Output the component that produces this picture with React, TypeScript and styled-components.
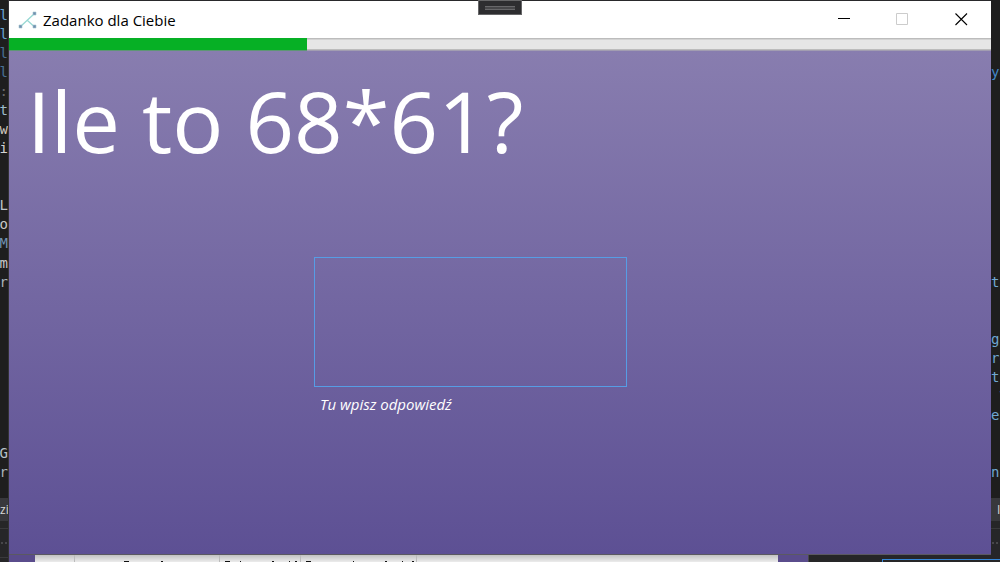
import React from "react";
import styled, { createGlobalStyle } from "styled-components";

const GlobalStyle = createGlobalStyle`
  * { box-sizing: border-box; }
  body { margin: 0; background: #1e1e1e; font-family: "Open Sans", "Noto Sans", sans-serif; }
`;

const Desktop = styled.div`
  display: grid;
  grid-template-columns: 9px minmax(0, 1fr) 9px;
  grid-template-rows: minmax(0, 1fr) 7px;
  height: 100vh;
  overflow: hidden;
  background: #1e1e1e;
`;

const Strip = styled.aside<{ $side: "left" | "right" }>`
  grid-row: ${(p) => (p.$side === "left" ? "1 / 3" : "1 / 2")};
  grid-column: ${(p) => (p.$side === "left" ? 1 : 3)};
  display: flex;
  flex-direction: column;
  overflow: hidden;
  border-right: ${(p) => (p.$side === "left" ? "1px solid #333235" : "0")};
`;

const Code = styled.div`
  flex: 1;
  display: flex;
  flex-direction: column;
  padding: 5px 0 16px;
  font: 14px "DejaVu Sans Mono", monospace;
`;

const CodeLine = styled.div<{ $side: "left" | "right"; $color: string }>`
  flex: 1;
  display: flex;
  align-items: center;
  justify-content: ${(p) => (p.$side === "left" ? "flex-end" : "flex-start")};
  min-height: 0;
  white-space: pre;
  color: ${(p) => p.$color};
`;

const PanelTab = styled.div<{ $side: "left" | "right" }>`
  display: flex;
  align-items: center;
  height: 23px;
  padding-left: ${(p) => (p.$side === "left" ? 0 : 6)}px;
  background: #38383c;
  color: #d8d8d8;
  font-size: 12px;
  white-space: nowrap;
`;

const PanelBody = styled.div<{ $tall: boolean }>`
  height: ${(p) => (p.$tall ? 41 : 34)}px;
  padding-top: 7px;
  background: #262628;
`;

const PanelRow = styled.div<{ $closed: boolean }>`
  height: 30px;
  border: solid #39393c;
  border-width: ${(p) => (p.$closed ? "1px 0" : "1px 0 0")};
  background: radial-gradient(circle, #47474a 1px, transparent 1px) 0 10px / 4px 8px repeat-x;
`;

const Window = styled.main`
  position: relative;
  grid-column: 2;
  grid-row: 1;
  display: flex;
  flex-direction: column;
  min-width: 0;
  border-top: 1px solid #29292b;
  background: #fff;
`;

const TitleBar = styled.header`
  display: flex;
  align-items: center;
  height: 37px;
  padding-left: 9px;
  background: #fff;
`;

const Title = styled.span`
  flex: 1;
  padding-left: 6px;
  color: #000;
  font-size: 15px;
  line-height: 20px;
`;

const CaptionButton = styled.button`
  display: flex;
  align-items: center;
  justify-content: center;
  width: 59px;
  height: 37px;
  padding: 0;
  border: 0;
  background: none;
`;

const Progress = styled.progress`
  display: block;
  flex: none;
  width: 100%;
  height: 13px;
  border: 0;
  appearance: none;
  background: #e6e6e6;
  &::-webkit-progress-bar {
    background: linear-gradient(#bcbcbc 1px, #d3d3d3 1px 2px, #e6e6e6 2px 11px, #bcbcbc 11px 12px, #a29db1 12px);
  }
  &::-webkit-progress-value {
    background: linear-gradient(#06b025 12px, #5e9675 12px);
  }
`;

const Content = styled.section`
  flex: 1;
  padding: 9px 18px;
  background: linear-gradient(#887daf, #5d5094);
  border-bottom: 1px solid #5b5961;
  color: #fff;
`;

const Question = styled.h1`
  margin: 0;
  font-size: 85px;
  font-weight: 400;
  line-height: 120px;
  white-space: nowrap;
`;

const AnswerField = styled.div`
  display: flex;
  flex-direction: column;
  width: 313px;
  margin: 77px 0 0 287px;
`;

const AnswerInput = styled.input`
  width: 100%;
  height: 130px;
  padding: 0 8px;
  border: 1px solid #569de5;
  background: transparent;
  color: #fff;
  font: 85px "Open Sans", sans-serif;
  outline: none;
`;

const AnswerLabel = styled.label`
  padding: 7px 6px 0;
  font-size: 15px;
  font-style: italic;
  line-height: 20px;
`;

const DebugHandle = styled.div`
  position: absolute;
  top: -1px;
  left: 469px;
  width: 44px;
  height: 15px;
  padding: 5px 6px;
  border: 1px solid #666668;
  background: #2d2d30;
`;

const Grip = styled.div`
  height: 4px;
  border: solid #67676a;
  border-width: 1px 0;
  background: #47474a;
`;

const Below = styled.div`
  grid-column: 2 / 4;
  grid-row: 2;
  display: flex;
  background: #262628;
`;

const BackWindow = styled.div`
  display: flex;
  width: 800px;
  padding: 0 30px 0 26px;
  border-right: 1px solid #48484a;
  background: #5a4c8c;
`;

const Sheet = styled.div`
  flex: 1;
  display: flex;
  padding-right: 14px;
  background: linear-gradient(#c2c2c2, #ececec);
`;

const SheetCell = styled.div<{ $width: number }>`
  width: ${(p) => p.$width}px;
  border-right: 1px solid #bcbcbc;
`;

const BackPanel = styled.div`
  flex: 1;
  margin: 4px 0 0 73px;
  border: solid #3585d6;
  border-width: 1px 0 0 1px;
`;

const leftCode: Record<number, [string, string]> = {
  0: ["al", "#69a3d0"],
  1: ["al", "#69a3d0"],
  2: ["al", "#497294"],
  3: ["al", "#497294"],
  4: [":", "#68686a"],
  5: ["t", "#9cbccb"],
  6: ["ow", "#cdc5bb"],
  7: ["i", "#d3d3d3"],
  10: ["L", "#bcc4c9"],
  11: ["o", "#c8c8c8"],
  12: ["M", "#7192b2"],
  13: ["m", "#c8c8c8"],
  14: ["ar", "#a9b3bb"],
  23: ["G", "#b8c2c9"],
  24: ["ar", "#a9b3bb"],
};

const rightCode: Record<number, [string, string]> = {
  3: ["yN", "#4288c8"],
  14: ["ti", "#6fa6d1"],
  17: ["gr", "#6fa6d1"],
  18: ["re", "#6fa6d1"],
  19: ["ti", "#6fa6d1"],
  20: [" V", "#6fa6d1"],
  21: ["er", "#6fa6d1"],
  24: ["nn", "#6fa6d1"],
};

function EditorStrip({ side }: { side: "left" | "right" }) {
  const code = side === "left" ? leftCode : rightCode;
  return (
    <Strip $side={side} aria-hidden="true">
      <Code>
        {Array.from({ length: 25 }, (_, i) => (
          <CodeLine key={i} $side={side} $color={code[i]?.[1] ?? "#ccc"}>
            {code[i]?.[0]}
          </CodeLine>
        ))}
      </Code>
      <PanelTab $side={side}>{side === "left" ? "zio" : "I"}</PanelTab>
      <PanelBody $tall={side === "left"}>
        <PanelRow $closed={side === "left"} />
      </PanelBody>
    </Strip>
  );
}

/* Tops of the column captions that stick out above the lower edge. */
function CaptionTops({ width, marks }: { width: number; marks: [number, number][] }) {
  return (
    <svg width={width} height="7" display="block">
      {marks.map(([x, w]) => (
        <rect key={x} x={x} y="6" width={w} height="1" fill="#111" />
      ))}
    </svg>
  );
}

export default function App() {
  return (
    <>
      <GlobalStyle />
      <Desktop>
        <EditorStrip side="left" />
        <Window>
          <TitleBar>
            <svg width="19" height="18" viewBox="0 0 19 18">
              <path d="M2.5 15.5L16 3M9.5 9.5l6 5.5" fill="none" stroke="#98d8d3" strokeWidth="1.3" />
              <path d="M1 14h3v3H1zM15 1h3v3h-3zM15 14h3v3h-3z" fill="#6f8fae" stroke="#a5c6d2" strokeWidth="0.6" />
            </svg>
            <Title>Zadanko dla Ciebie</Title>
            <CaptionButton aria-label="Minimalizuj">
              <svg width="13" height="13" shapeRendering="crispEdges">
                <path d="M1 5.5h12" stroke="#000" />
              </svg>
            </CaptionButton>
            <CaptionButton aria-label="Maksymalizuj" disabled>
              <svg width="13" height="13">
                <path d="M.5.5h11v11H.5z" fill="none" stroke="#ccc" />
              </svg>
            </CaptionButton>
            <CaptionButton aria-label="Zamknij">
              <svg width="13" height="13">
                <path d="M.5.5L12 12M12 .5L.5 12" stroke="#000" strokeWidth="1.1" />
              </svg>
            </CaptionButton>
          </TitleBar>
          <Progress value={298} max={982} aria-label="Czas" />
          <Content>
            <Question>Ile to 68*61?</Question>
            <AnswerField>
              <AnswerInput id="answer" type="text" autoComplete="off" />
              <AnswerLabel htmlFor="answer">Tu wpisz odpowiedź</AnswerLabel>
            </AnswerField>
          </Content>
          <DebugHandle>
            <Grip />
          </DebugHandle>
        </Window>
        <EditorStrip side="right" />
        <Below aria-hidden="true">
          <BackWindow>
            <Sheet>
              <SheetCell $width={40} />
              <SheetCell $width={145}>
                <CaptionTops width={144} marks={[[49, 5], [86, 2]]} />
              </SheetCell>
              <SheetCell $width={81}>
                <CaptionTops width={80} marks={[[5, 5], [20, 1], [52, 2], [69, 1], [75, 2]]} />
              </SheetCell>
              <SheetCell $width={116}>
                <CaptionTops width={115} marks={[[5, 5], [52, 1], [84, 2], [101, 1], [111, 2]]} />
              </SheetCell>
            </Sheet>
          </BackWindow>
          <BackPanel />
        </Below>
      </Desktop>
    </>
  );
}
